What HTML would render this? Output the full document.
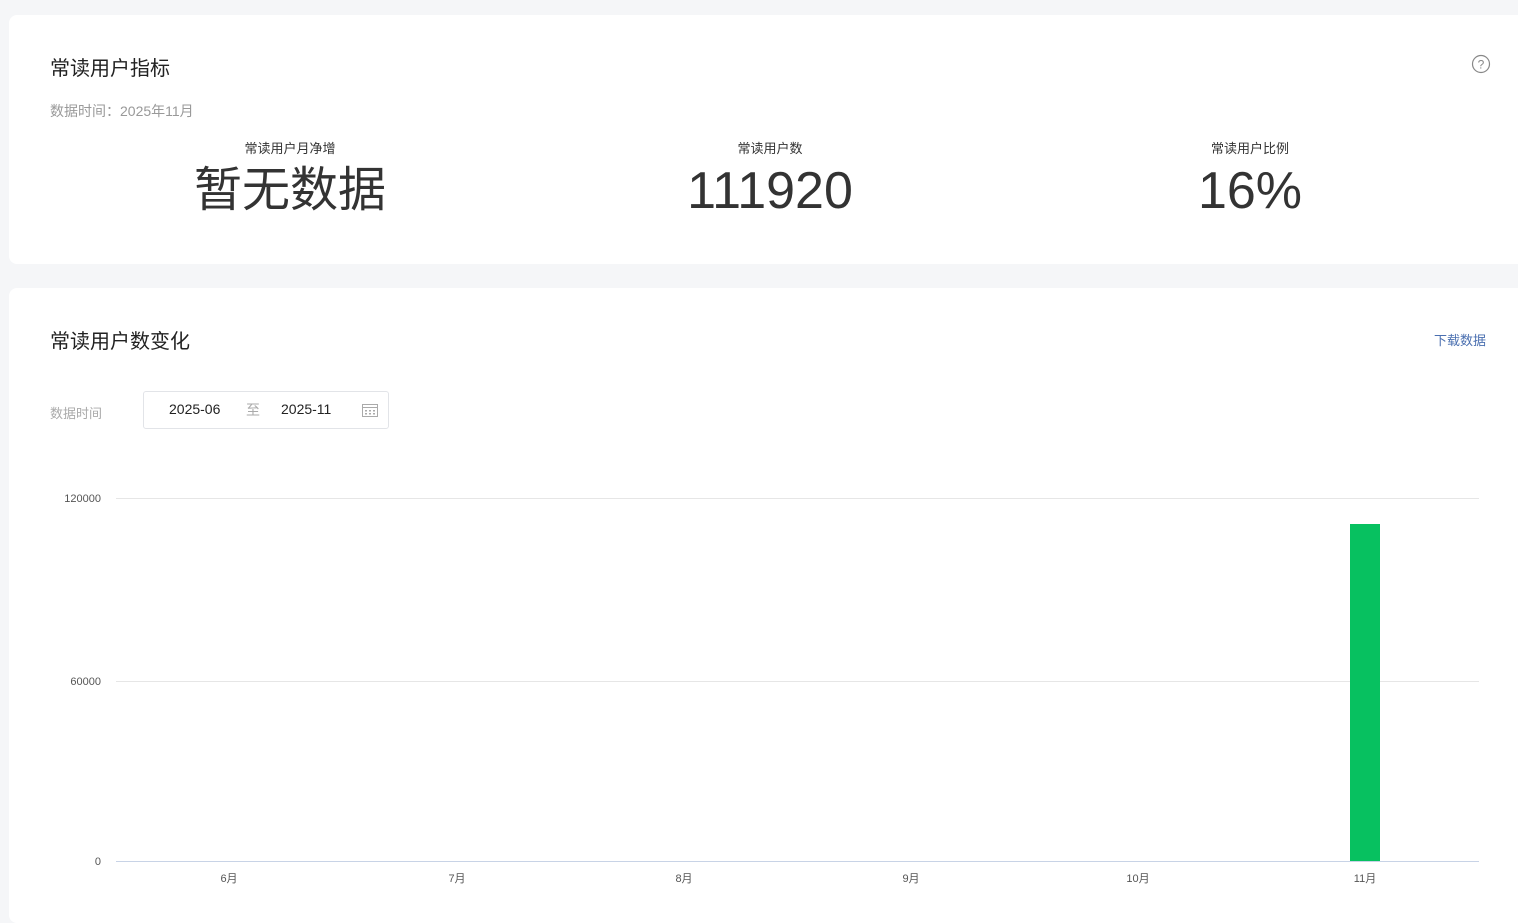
<!DOCTYPE html>
<html><head><meta charset="utf-8"><style>
html,body{margin:0;width:1518px;height:923px;overflow:hidden}
body{background:#f5f6f8;font-family:"Liberation Sans","Noto Sans CJK SC",sans-serif;position:relative}
.card{position:absolute;left:9px;right:0;background:#fff;border-radius:8px 0 0 8px}
.t{position:absolute;white-space:nowrap}
.c{transform:translateX(-50%)}
</style></head><body>
<div class="card" style="top:15px;height:249px"></div>
<div class="card" style="top:288px;height:635px"></div>
<div class="t" style="left:50px;top:52px;font-size:20px;color:#222">常读用户指标</div>
<div class="t" style="left:50px;top:101px;font-size:14px;color:#999">数据时间：2025年11月</div>
<svg style="position:absolute;left:1471px;top:54px" width="20" height="20"><circle cx="10" cy="10" r="8.5" fill="none" stroke="#888" stroke-width="1.2"/><text x="10" y="14.5" font-size="12" text-anchor="middle" fill="#888" font-family="Liberation Sans">?</text></svg>
<div class="t c" style="left:290px;top:138px;font-size:13px;color:#333">常读用户月净增</div>
<div class="t c" style="left:290px;top:160px;font-size:48px;color:#333;line-height:62px">暂无数据</div>
<div class="t c" style="left:770px;top:138px;font-size:13px;color:#333">常读用户数</div>
<div class="t c" style="left:770px;top:160px;font-size:52px;color:#333;line-height:62px">111920</div>
<div class="t c" style="left:1250px;top:138px;font-size:13px;color:#333">常读用户比例</div>
<div class="t c" style="left:1250px;top:160px;font-size:52px;color:#333;line-height:62px">16%</div>

<div class="t" style="left:50px;top:325px;font-size:20px;color:#222">常读用户数变化</div>
<div class="t" style="left:1434px;top:330px;font-size:13px;color:#4a6fb0">下载数据</div>
<div class="t" style="left:50px;top:403px;font-size:13px;color:#aaa">数据时间</div>
<div style="position:absolute;left:143px;top:391px;width:244px;height:36px;border:1px solid #e2e4e8;border-radius:3px"></div>
<div class="t" style="left:169px;top:401px;font-size:14px;color:#222">2025-06</div>
<div class="t" style="left:246px;top:400px;font-size:14px;color:#aaa">至</div>
<div class="t" style="left:281px;top:401px;font-size:14px;color:#222">2025-11</div>
<svg style="position:absolute;left:362px;top:403px" width="16" height="14"><rect x="0.5" y="1.5" width="15" height="12" fill="none" stroke="#aaa"/><line x1="0" y1="4.5" x2="16" y2="4.5" stroke="#aaa"/><g fill="#aaa"><rect x="3" y="7" width="2" height="1.5"/><rect x="7" y="7" width="2" height="1.5"/><rect x="11" y="7" width="2" height="1.5"/><rect x="3" y="10" width="2" height="1.5"/><rect x="7" y="10" width="2" height="1.5"/><rect x="11" y="10" width="2" height="1.5"/></g></svg>

<div style="position:absolute;left:116px;top:498px;width:1363px;height:1px;background:#e6e6e6"></div>
<div style="position:absolute;left:116px;top:681px;width:1363px;height:1px;background:#e6e6e6"></div>
<div style="position:absolute;left:116px;top:861px;width:1363px;height:1px;background:#c8d3e6"></div>
<div class="t" style="right:1417px;top:493px;font-size:11px;color:#555">120000</div>
<div class="t" style="right:1417px;top:676px;font-size:11px;color:#555">60000</div>
<div class="t" style="right:1417px;top:856px;font-size:11px;color:#555">0</div>
<div style="position:absolute;left:1350px;top:524px;width:30px;height:337px;background:#07c160"></div>
<div class="t c" style="left:229px;top:870px;font-size:11px;color:#555">6月</div>
<div class="t c" style="left:457px;top:870px;font-size:11px;color:#555">7月</div>
<div class="t c" style="left:684px;top:870px;font-size:11px;color:#555">8月</div>
<div class="t c" style="left:911px;top:870px;font-size:11px;color:#555">9月</div>
<div class="t c" style="left:1138px;top:870px;font-size:11px;color:#555">10月</div>
<div class="t c" style="left:1365px;top:870px;font-size:11px;color:#555">11月</div>
</body></html>
